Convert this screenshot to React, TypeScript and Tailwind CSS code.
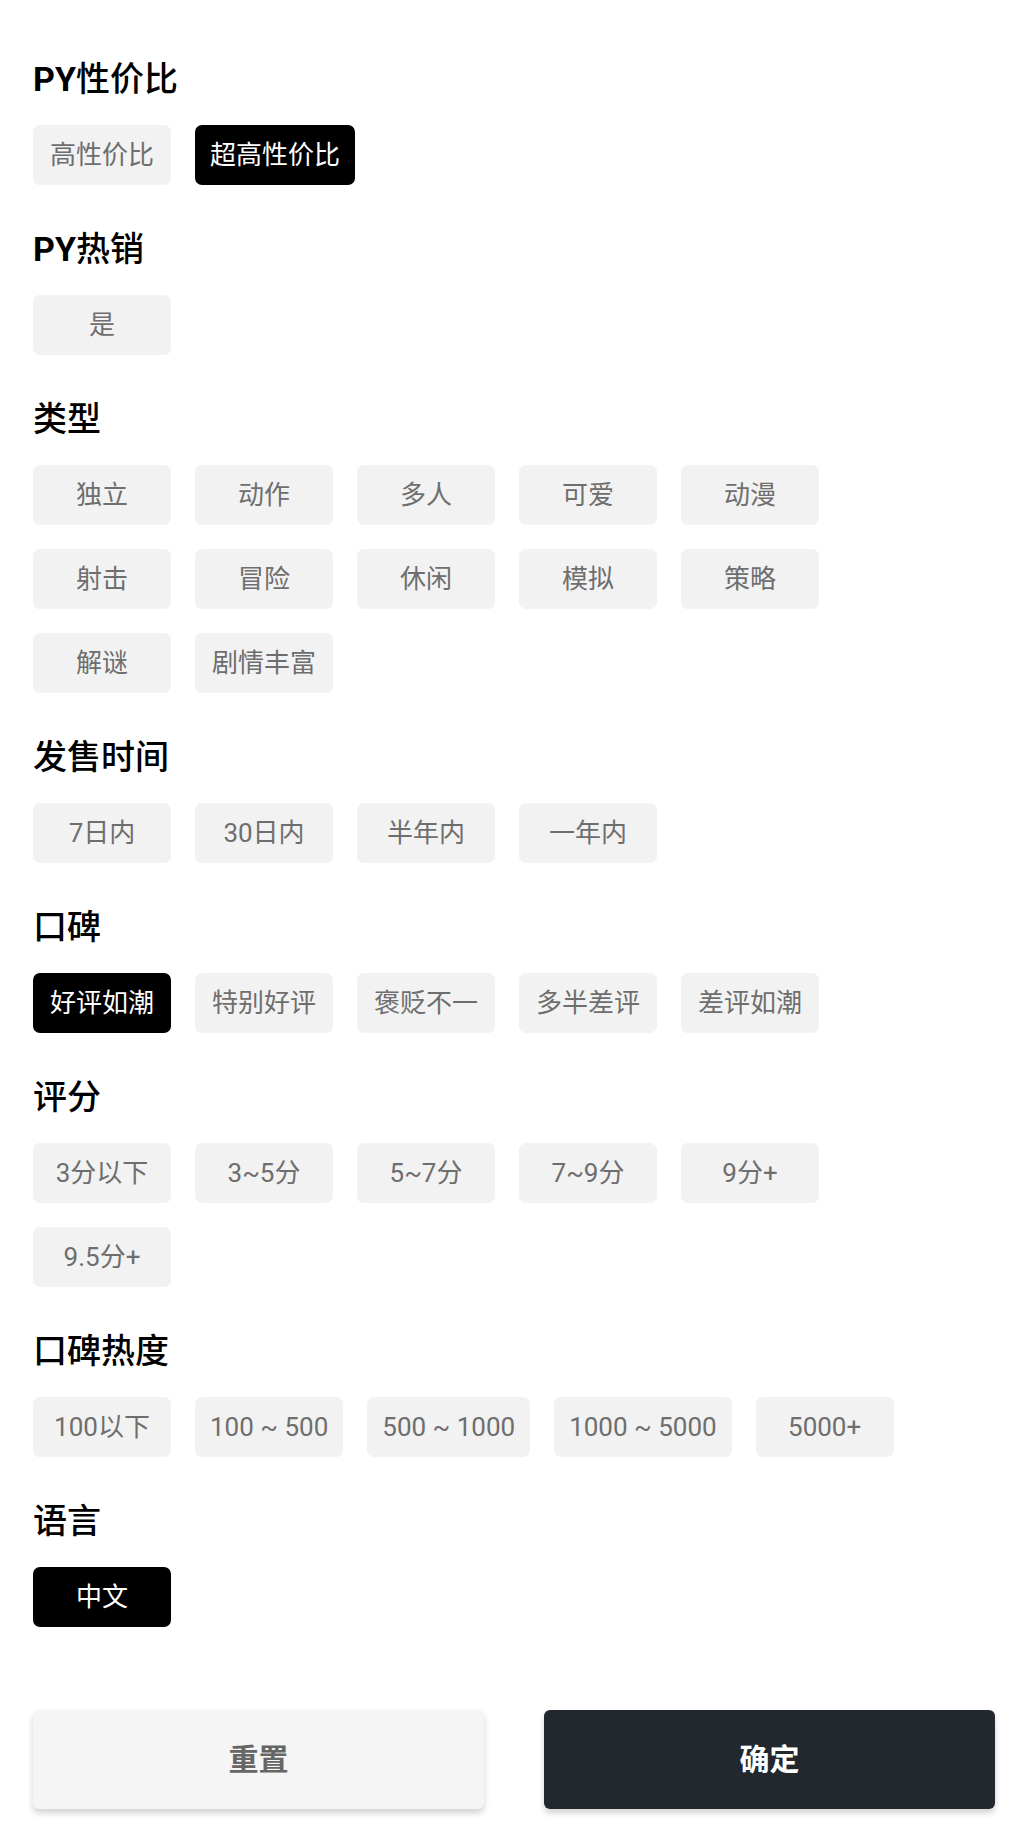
import React, { useState } from "react";

type Group = {
  title: string;
  options: string[];
};

const groups: Group[] = [
  { title: "PY性价比", options: ["高性价比", "超高性价比"] },
  { title: "PY热销", options: ["是"] },
  {
    title: "类型",
    options: ["独立", "动作", "多人", "可爱", "动漫", "射击", "冒险", "休闲", "模拟", "策略", "解谜", "剧情丰富"],
  },
  { title: "发售时间", options: ["7日内", "30日内", "半年内", "一年内"] },
  { title: "口碑", options: ["好评如潮", "特别好评", "褒贬不一", "多半差评", "差评如潮"] },
  { title: "评分", options: ["3分以下", "3~5分", "5~7分", "7~9分", "9分+", "9.5分+"] },
  { title: "口碑热度", options: ["100以下", "100 ~ 500", "500 ~ 1000", "1000 ~ 5000", "5000+"] },
  { title: "语言", options: ["中文"] },
];

const initial: Record<string, string[]> = {
  PY性价比: ["超高性价比"],
  口碑: ["好评如潮"],
  语言: ["中文"],
};

export default function App() {
  const [selected, setSelected] = useState<Record<string, string[]>>(initial);

  // Toggle one option inside a group
  const toggle = (group: string, option: string) => {
    setSelected((prev) => {
      const list = prev[group] || [];
      const next = list.includes(option)
        ? list.filter((o) => o !== option)
        : [...list, option];
      return { ...prev, [group]: next };
    });
  };

  return (
    <div
      className="min-h-screen bg-white px-[33px] pt-[59px] pb-[20px]"
      style={{ fontFamily: 'Roboto, "Noto Sans CJK SC", sans-serif' }}
    >
      <div className="flex flex-col gap-[44px]">
        {groups.map((group) => (
          <section key={group.title}>
            <h2 className="h-10 text-[34px] leading-10 font-medium text-black mb-[26px]">
              {group.title.startsWith("PY") ? (
                <>
                  <span className="font-bold">PY</span>
                  {group.title.slice(2)}
                </>
              ) : (
                group.title
              )}
            </h2>
            <div className="flex flex-wrap gap-6 max-w-[900px]">
              {group.options.map((option) => {
                const active = (selected[group.title] || []).includes(option);
                return (
                  <button
                    key={option}
                    type="button"
                    onClick={() => toggle(group.title, option)}
                    className={`h-[60px] min-w-[138px] px-[15px] rounded-[7px] text-[26px] leading-none whitespace-nowrap ${
                      active
                        ? "bg-black text-white"
                        : "bg-[#f2f2f2] text-[#6e6e6e]"
                    }`}
                  >
                    {option}
                  </button>
                );
              })}
            </div>
          </section>
        ))}
      </div>

      {/* Bottom actions */}
      <div className="flex gap-[60px] mt-[83px]">
        <button
          type="button"
          onClick={() => setSelected({})}
          className="flex-1 h-[99px] rounded-[6px] bg-[#f5f5f5] text-[#666666] text-[30px] font-bold shadow-[0_4px_6px_rgba(0,0,0,0.18)]"
        >
          重置
        </button>
        <button
          type="button"
          className="flex-1 h-[99px] rounded-[6px] bg-[#23272e] text-white text-[30px] font-bold shadow-[0_4px_6px_rgba(0,0,0,0.18)]"
        >
          确定
        </button>
      </div>
    </div>
  );
}
